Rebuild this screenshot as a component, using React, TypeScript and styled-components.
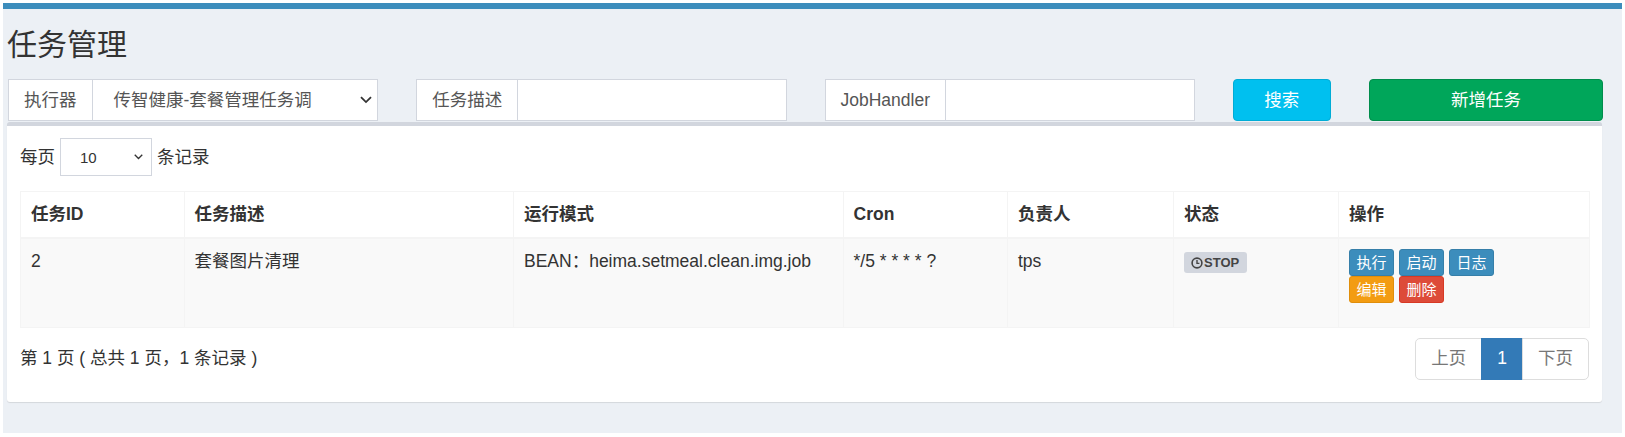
import React from 'react';
import styled, { createGlobalStyle } from 'styled-components';

const FONT = `"Liberation Sans", "Noto Sans CJK SC", sans-serif`;

const GlobalStyle = createGlobalStyle`
  html, body {
    margin: 0;
    padding: 0;
    background: #fff;
  }
  body {
    font-family: ${FONT};
    font-size: 17.5px;
    line-height: 25px;
    color: #333;
  }
  * {
    box-sizing: border-box;
  }
`;

const COLUMNS = [
  { title: '任务ID', width: 163.5 },
  { title: '任务描述', width: 329.5 },
  { title: '运行模式', width: 329.5 },
  { title: 'Cron', width: 164.5 },
  { title: '负责人', width: 166 },
  { title: '状态', width: 165 },
  { title: '操作', width: 251 },
];

const Chevron = ({ size = 12 }: { size?: number }) => (
  <svg width={size} height={size * 0.6} viewBox="0 0 12 7" fill="none">
    <polyline points="1,1 6,6 11,1" stroke="#333" strokeWidth="1.8" />
  </svg>
);

const ClockIcon = () => (
  <svg width="12" height="12" viewBox="0 0 12 12" fill="none">
    <circle cx="6" cy="6" r="4.9" stroke="#444" strokeWidth="1.6" />
    <polyline points="6,3 6,6.4 8.4,6.4" stroke="#444" strokeWidth="1.4" />
  </svg>
);

const App = () => (
  <>
    <GlobalStyle />
    <Frame>
      <TopBar />
      <Content>
        <Title>任务管理</Title>
        <FilterRow>
          <InputGroup $span={3}>
            <Addon>执行器</Addon>
            <SelectBox>
              <span>传智健康-套餐管理任务调</span>
              <Chevron />
            </SelectBox>
          </InputGroup>
          <InputGroup $span={3}>
            <Addon>任务描述</Addon>
            <TextInput />
          </InputGroup>
          <InputGroup $span={3}>
            <Addon>JobHandler</Addon>
            <TextInput />
          </InputGroup>
          <ActionButton $span={1} $bg="#00c0ef" $border="#00acd6">
            搜索
          </ActionButton>
          <ActionButton $span={2} $bg="#00a65a" $border="#008d4c">
            新增任务
          </ActionButton>
        </FilterRow>

        <Card>
          <LengthRow>
            <span>每页</span>
            <SmallSelect>
              <span>10</span>
              <Chevron size={9} />
            </SmallSelect>
            <span>条记录</span>
          </LengthRow>

          <Table>
            <colgroup>
              {COLUMNS.map((c) => (
                <col key={c.title} style={{ width: c.width }} />
              ))}
            </colgroup>
            <thead>
              <tr>
                {COLUMNS.map((c) => (
                  <Th key={c.title}>{c.title}</Th>
                ))}
              </tr>
            </thead>
            <tbody>
              <BodyRow>
                <Td>2</Td>
                <Td>套餐图片清理</Td>
                <Td>BEAN：heima.setmeal.clean.img.job</Td>
                <Td>*/5 * * * * ?</Td>
                <Td>tps</Td>
                <Td>
                  <StatusLabel>
                    <ClockIcon />
                    STOP
                  </StatusLabel>
                </Td>
                <Td>
                  <OpLine>
                    <OpButton $bg="#3c8dbc" $border="#367fa9">执行</OpButton>
                    <OpButton $bg="#3c8dbc" $border="#367fa9">启动</OpButton>
                    <OpButton $bg="#3c8dbc" $border="#367fa9">日志</OpButton>
                  </OpLine>
                  <OpLine>
                    <OpButton $bg="#f39c12" $border="#e08e0b">编辑</OpButton>
                    <OpButton $bg="#dd4b39" $border="#d73925">删除</OpButton>
                  </OpLine>
                </Td>
              </BodyRow>
            </tbody>
          </Table>

          <Footer>
            <Info>第 1 页 ( 总共 1 页，1 条记录 )</Info>
            <Pagination>
              <PageItem $first>上页</PageItem>
              <PageItem $active>1</PageItem>
              <PageItem $last>下页</PageItem>
            </Pagination>
          </Footer>
        </Card>
      </Content>
    </Frame>
  </>
);

const Frame = styled.div`
  margin: 3px;
  height: 430px;
  background: #ecf0f5;
  overflow: hidden;
`;

const TopBar = styled.div`
  height: 6px;
  background: #3c8dbc;
`;

const Content = styled.div`
  padding: 0 20px 0 4px;
`;

const Title = styled.h1`
  margin: 19px 0 0 0;
  font-size: 30px;
  line-height: 33px;
  font-weight: 400;
  color: #333;
`;

const FilterRow = styled.div`
  display: grid;
  grid-template-columns: repeat(12, minmax(0, 1fr));
  column-gap: 38px;
  height: 42px;
  margin: 18px -1px 0 1px;
`;

const InputGroup = styled.div<{ $span: number }>`
  grid-column: span ${(p) => p.$span};
  display: flex;
  border: 1px solid #d2d6de;
  background: #fff;
  min-width: 0;
`;

const Addon = styled.div`
  display: flex;
  align-items: center;
  padding: 0 15px;
  border-right: 1px solid #d2d6de;
  color: #555;
  white-space: nowrap;
`;

const SelectBox = styled.div`
  flex: 1;
  display: flex;
  align-items: center;
  justify-content: space-between;
  padding: 0 5px 0 21px;
  color: #555;
  white-space: nowrap;
  overflow: hidden;
`;

const TextInput = styled.div`
  flex: 1;
`;

const ActionButton = styled.div<{ $span: number; $bg: string; $border: string }>`
  grid-column: span ${(p) => p.$span};
  display: flex;
  align-items: center;
  justify-content: center;
  background: ${(p) => p.$bg};
  border: 1px solid ${(p) => p.$border};
  border-radius: 4px;
  color: #fff;
`;

const Card = styled.div`
  margin-top: 1px;
  background: #fff;
  border-top: 4px solid #d2d6de;
  border-radius: 3px;
  box-shadow: 0 1px 1px rgba(0, 0, 0, 0.1);
  padding: 12px 13px 22px;
`;

const LengthRow = styled.div`
  display: flex;
  align-items: center;
  gap: 5px;
  color: #333;
`;

const SmallSelect = styled.div`
  display: flex;
  align-items: center;
  justify-content: space-between;
  width: 92px;
  height: 38px;
  padding: 0 8px 0 19px;
  border: 1px solid #d2d6de;
  font-size: 15px;
  color: #333;
`;

const Table = styled.table`
  margin-top: 15px;
  width: 1569px;
  table-layout: fixed;
  border-collapse: collapse;
  border: 1px solid #f4f4f4;
`;

const Th = styled.th`
  text-align: left;
  font-weight: 700;
  padding: 10px;
  border: 1px solid #f4f4f4;
  border-bottom-width: 2px;
  color: #333;
`;

const BodyRow = styled.tr`
  background: #f9f9f9;
  height: 89px;
`;

const Td = styled.td`
  vertical-align: top;
  padding: 10px;
  border: 1px solid #f4f4f4;
  color: #333;
`;

const StatusLabel = styled.span`
  display: inline-flex;
  align-items: center;
  gap: 1px;
  margin-top: 3px;
  height: 21px;
  padding: 0 8px 0 7px;
  background: #d2d6de;
  border-radius: 3px;
  color: #444;
  font-size: 13px;
  font-weight: 700;
  line-height: 1;
`;

const OpLine = styled.div`
  display: flex;
  gap: 5px;
`;

const OpButton = styled.span<{ $bg: string; $border: string }>`
  display: inline-flex;
  align-items: center;
  justify-content: center;
  height: 27px;
  padding: 0 6.5px;
  background: ${(p) => p.$bg};
  border: 1px solid ${(p) => p.$border};
  border-radius: 3px;
  color: #fff;
  font-size: 15px;
`;

const Footer = styled.div`
  display: flex;
  justify-content: space-between;
  align-items: flex-start;
  margin-top: 10px;
`;

const Info = styled.div`
  padding-top: 8px;
  color: #333;
`;

const Pagination = styled.div`
  display: flex;
`;

const PageItem = styled.span<{ $active?: boolean; $first?: boolean; $last?: boolean }>`
  display: inline-flex;
  align-items: center;
  height: 42px;
  padding: 0 15px;
  border: 1px solid ${(p) => (p.$active ? '#337ab7' : '#ddd')};
  background: ${(p) => (p.$active ? '#337ab7' : '#fff')};
  color: ${(p) => (p.$active ? '#fff' : '#777')};
  border-radius: ${(p) => (p.$first ? '5px 0 0 5px' : p.$last ? '0 5px 5px 0' : '0')};
  margin-left: ${(p) => (p.$first ? '0' : '-1px')};
`;

export default App;
